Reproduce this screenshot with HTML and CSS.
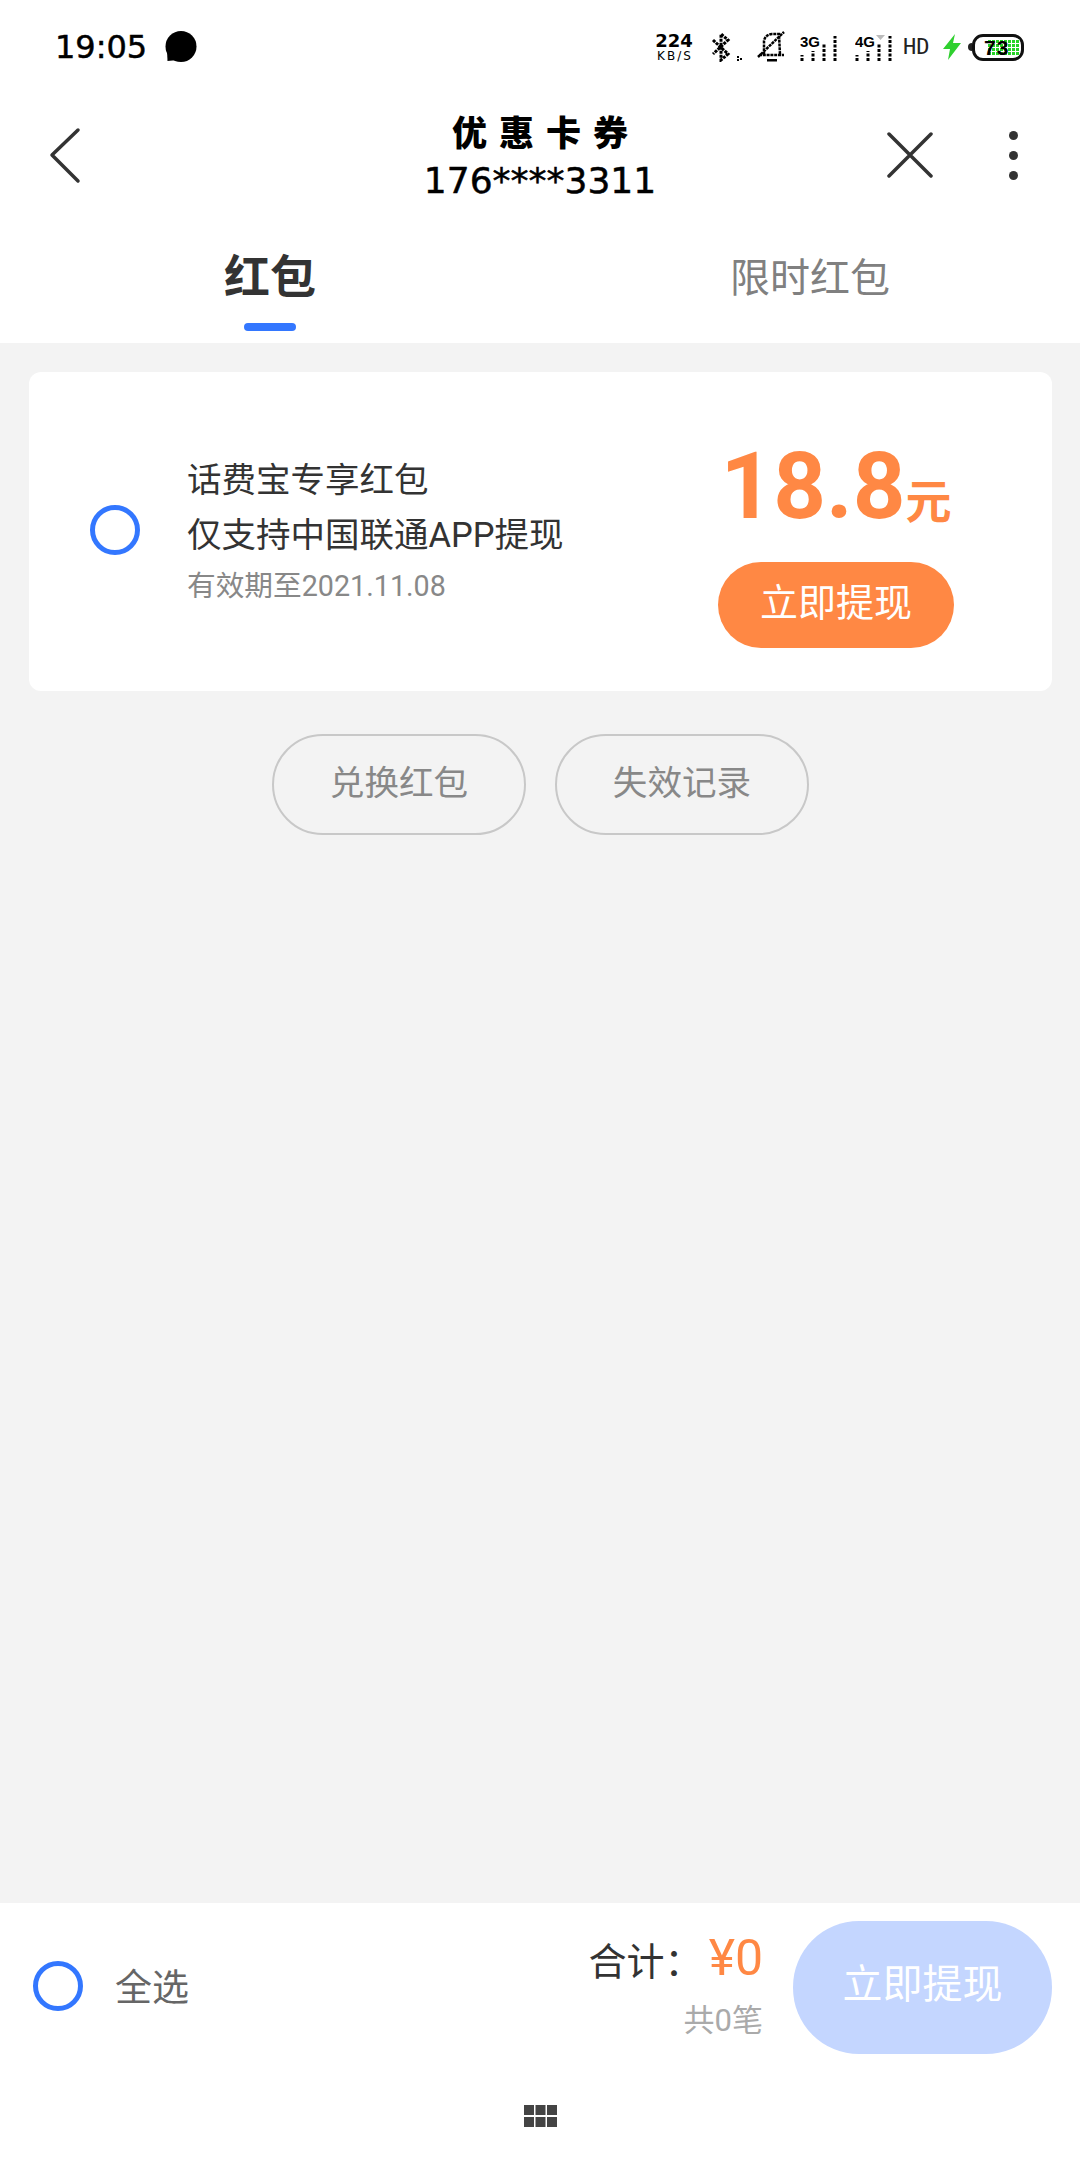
FILE: index.html

```html
<!DOCTYPE html>
<html lang="zh-CN">
<head>
    <meta charset="UTF-8" />
    <title>优惠卡券</title>
    <link rel="stylesheet" href="styles.css">
</head>
<body>
    <div class="status">
        <span class="status-time">19:05</span>
        <svg class="status-msg" width="34" height="34" viewBox="0 0 34 34"><circle cx="17" cy="16.500" r="15.500" fill="#000"/><path d="M3 20 L3.500 31 L14 30 Z" fill="#000"/></svg>
        <div class="status-icons">
            <div class="speed"><b>224</b><span>KB/S</span></div>
            <svg class="ic-bt" width="32" height="30" viewBox="0 0 32 30">
                <path d="M2 8 L17 22 L10 28 L10 2 L17 8 L2 22" fill="none" stroke="#000" stroke-width="3" stroke-dasharray="3 1"/>
                <rect x="26" y="24" width="2" height="2"/><rect x="29" y="26" width="2" height="2"/><rect x="26" y="27" width="2" height="2"/>
            </svg>
            <svg class="ic-bell" width="30" height="32" viewBox="0 0 30 32">
                <path d="M1 26 L27 1 M7 24 L7 10 Q8 4 15 3 L22 3 L23 24 M2 24 L27 24" fill="none" stroke="#000" stroke-width="2.500" stroke-dasharray="3 0.800"/>
                <rect x="10" y="28" width="10" height="2.500"/>
            </svg>
            <svg class="ic-signal" width="37" height="32" viewBox="0 0 37 32">
                <text x="0" y="16" class="net">3G</text>
                <g fill="none" stroke="#000" stroke-width="3" stroke-dasharray="3 1.500">
                    <path d="M2 30 V24"/><path d="M13 30 V20"/><path d="M24 30 V12"/><path d="M35 30 V5"/>
                </g>
            </svg>
            <svg class="ic-signal" width="37" height="32" viewBox="0 0 37 32">
                <text x="0" y="16" class="net">4G</text>
                <path d="M21 4 H30 L25.500 9 Z" fill="#bbb"/>
                <g fill="none" stroke="#000" stroke-width="3" stroke-dasharray="3 1.500">
                    <path d="M2 30 V24"/><path d="M13 30 V20"/><path d="M24 30 V12"/><path d="M35 30 V5"/>
                </g>
            </svg>
            <svg class="ic-hd" width="30" height="28" viewBox="0 0 30 28"><text x="0" y="21" class="hd">HD</text></svg>
            <svg class="ic-bolt" width="18" height="26" viewBox="0 0 18 26"><path d="M12 0 L0 15 L7 15 L5 26 L18 9 L10 9 Z" fill="#2fd02f"/></svg>
            <div class="battery-tip"></div>
            <div class="battery"><div class="battery-fill"></div><b>73</b></div>
        </div>
    </div>

    <div class="topbar">
        <svg class="back" width="40" height="60" viewBox="0 0 40 60"><path d="M30 5 L4 30 L30 56" fill="none" stroke="#333" stroke-width="3.500" stroke-linecap="round" stroke-linejoin="round"/></svg>
        <div class="title">
            <div class="title-main">优惠卡券</div>
            <div class="title-sub">176****3311</div>
        </div>
        <svg class="close" width="46" height="46" viewBox="0 0 46 46"><path d="M2 2 L44 44 M44 2 L2 44" fill="none" stroke="#333" stroke-width="3.500" stroke-linecap="round"/></svg>
        <div class="more"><i></i><i></i><i></i></div>
    </div>

    <div class="tabs">
        <div class="tab tab-active">红包<span class="tab-line"></span></div>
        <div class="tab">限时红包</div>
    </div>

    <div class="main">
        <div class="card">
            <span class="radio"></span>
            <div class="card-text">
                <div class="card-line">话费宝专享红包</div>
                <div class="card-line">仅支持中国联通APP提现</div>
                <div class="card-date">有效期至2021.11.08</div>
            </div>
            <div class="card-right">
                <div class="amount">18.8<span>元</span></div>
                <div class="btn-orange">立即提现</div>
            </div>
        </div>
        <div class="pills">
            <div class="pill">兑换红包</div>
            <div class="pill">失效记录</div>
        </div>
    </div>

    <div class="bottom">
        <div class="bottom-row">
            <span class="radio"></span>
            <span class="select-all">全选</span>
            <div class="total">
                <div class="total-line">合计：<span>¥0</span></div>
                <div class="total-count">共0笔</div>
            </div>
            <div class="btn-blue">立即提现</div>
        </div>
        <svg class="nav-grid" width="33" height="22" viewBox="0 0 33 22">
            <rect x="0" y="0" width="10" height="10"/><rect x="11.500" y="0" width="10" height="10"/><rect x="23" y="0" width="10" height="10"/>
            <rect x="0" y="12" width="10" height="10"/><rect x="11.500" y="12" width="10" height="10"/><rect x="23" y="12" width="10" height="10"/>
        </svg>
    </div>
</body>
</html>
```

FILE: styles.css

```css
* {
    box-sizing: border-box;
}

body {
    margin: 0;
    width: 1080px;
    height: 2160px;
    display: flex;
    flex-direction: column;
    background-color: #fff;
    color: #333;
    font-family: Roboto, "Noto Sans CJK SC", sans-serif;
}

/* Barra de estado */
.status {
    height: 90px;
    display: flex;
    align-items: center;
    padding: 4px 56px 0 55px;
    color: #000;
}

.status-time {
    font-family: "DejaVu Sans", sans-serif;
    font-size: 32px;
    -webkit-text-stroke: 0.500px #000;
    width: 109px;
}

.status-msg {
    display: block;
}

.status-icons {
    margin-left: auto;
    display: flex;
    align-items: center;
}

.speed {
    width: 38px;
    display: flex;
    flex-direction: column;
    align-items: center;
    font-family: "DejaVu Sans", sans-serif;
    white-space: nowrap;
    margin-right: 18px;
}

.speed b {
    font-size: 18px;
    line-height: 18px;
}

.speed span {
    font-size: 12px;
    line-height: 12px;
    letter-spacing: 2px;
    margin-right: -2px;
}

.ic-bt {
    margin-right: 14px;
}

.ic-bell {
    margin-right: 13px;
}

.ic-signal {
    margin-right: 18px;
}

.net {
    font-family: "Liberation Sans", sans-serif;
    font-size: 15px;
    font-weight: bold;
}

.ic-signal + .ic-hd {
    margin-left: -7px;
}

.hd {
    font-family: "DejaVu Sans Mono", monospace;
    font-size: 22px;
    fill: #222;
}

.ic-hd {
    margin-right: 10px;
}

.ic-bolt {
    margin-right: 7px;
}

.battery-tip {
    width: 4px;
    height: 8px;
    background-color: #222;
    border-radius: 4px 0 0 4px;
}

.battery {
    position: relative;
    width: 52px;
    height: 27px;
    border: 3px solid #111;
    border-radius: 11px;
    overflow: hidden;
    display: flex;
    align-items: center;
    padding-left: 9px;
}

.battery-fill {
    position: absolute;
    top: 2px;
    bottom: 2px;
    left: 12px;
    right: 1px;
    background-color: #27d327;
    background-image: linear-gradient(#fff 1px, transparent 1px), linear-gradient(90deg, #fff 1px, transparent 1px);
    background-size: 4px 4px;
}

.battery b {
    position: relative;
    font-family: "Liberation Sans", sans-serif;
    font-size: 21px;
    line-height: 21px;
    letter-spacing: 1px;
    color: #000;
}

/* Cabecera */
.topbar {
    height: 130px;
    position: relative;
    display: flex;
    align-items: center;
    padding-left: 48px;
}

.title {
    position: absolute;
    left: 0;
    right: 0;
    top: 23px;
    text-align: center;
    color: #000;
}

.title-main {
    font-size: 35px;
    line-height: 44px;
    font-weight: 900;
    letter-spacing: 12px;
    margin-right: -12px;
}

.title-sub {
    font-family: "DejaVu Sans", sans-serif;
    font-size: 36px;
    line-height: 48px;
    -webkit-text-stroke: 0.500px #000;
}

.close {
    margin-left: auto;
}

.more {
    width: 10px;
    margin: 0 61px 0 76px;
    display: flex;
    flex-direction: column;
    gap: 11px;
}

.more i {
    width: 9px;
    height: 9px;
    border-radius: 50%;
    background-color: #333;
}

/* Pestañas */
.tabs {
    height: 123px;
    display: flex;
}

.tab {
    position: relative;
    width: 540px;
    text-align: center;
    padding-top: 24px;
    font-size: 40px;
    line-height: 70px;
    color: #808080;
}

.tab-active {
    padding-top: 22px;
    font-size: 46px;
    font-weight: bold;
    color: #333;
}

.tab-line {
    position: absolute;
    left: 244px;
    top: 103px;
    width: 52px;
    height: 8px;
    border-radius: 4px;
    background-color: #3377ff;
}

/* Contenido */
.main {
    flex: 1;
    background-color: #f3f3f3;
    padding: 29px 28px 0 29px;
}

.card {
    height: 319px;
    display: flex;
    align-items: center;
    padding-left: 61px;
    background-color: #fff;
    border-radius: 12px;
}

.radio {
    flex: none;
    width: 50px;
    height: 50px;
    border: 5px solid #3377ff;
    border-radius: 50%;
    margin-top: -3px;
}

.card-text {
    margin-left: 47px;
}

.card-line {
    font-size: 34.500px;
    line-height: 55px;
    color: #333;
}

.card-date {
    font-size: 28.700px;
    line-height: 47px;
    color: #888;
}

.card-right {
    align-self: flex-start;
    margin: 70px 98px 0 auto;
    width: 236px;
    display: flex;
    flex-direction: column;
    align-items: center;
}

.amount {
    height: 90px;
    line-height: 90px;
    white-space: nowrap;
    font-size: 92px;
    font-weight: bold;
    color: #ff8844;
}

.amount span {
    font-size: 46px;
}

.btn-orange {
    margin-top: 30px;
    width: 236px;
    height: 86px;
    line-height: 82px;
    text-align: center;
    border-radius: 43px;
    background-color: #ff8844;
    color: #fff;
    font-size: 38px;
}

.pills {
    margin-top: 43px;
    display: flex;
    justify-content: center;
    gap: 29px;
}

.pill {
    width: 254px;
    height: 101px;
    line-height: 95px;
    text-align: center;
    border: 2px solid #c8c8c8;
    border-radius: 51px;
    color: #888;
    font-size: 34.600px;
}

/* Barra inferior */
.bottom {
    height: 257px;
    background-color: #fff;
    display: flex;
    flex-direction: column;
}

.bottom-row {
    display: flex;
    align-items: center;
    height: 133px;
    margin-top: 18px;
    padding: 0 28px 0 33px;
}

.select-all {
    margin-left: 32px;
    margin-top: -5px;
    font-size: 37px;
    color: #666;
}

.total {
    margin-left: auto;
    text-align: right;
}

.total-line {
    font-size: 38px;
    line-height: 62px;
    color: #333;
}

.total-line span {
    margin-left: 6px;
    font-size: 50px;
    color: #ff8844;
}

.total-count {
    font-size: 31px;
    line-height: 56px;
    color: #aaa;
}

.btn-blue {
    margin-left: 30px;
    width: 259px;
    height: 133px;
    line-height: 128px;
    text-align: center;
    border-radius: 66px;
    background-color: #c4d6ff;
    color: #fff;
    font-size: 40px;
}

.nav-grid {
    margin: 51px auto 0;
    fill: #444;
}
```
